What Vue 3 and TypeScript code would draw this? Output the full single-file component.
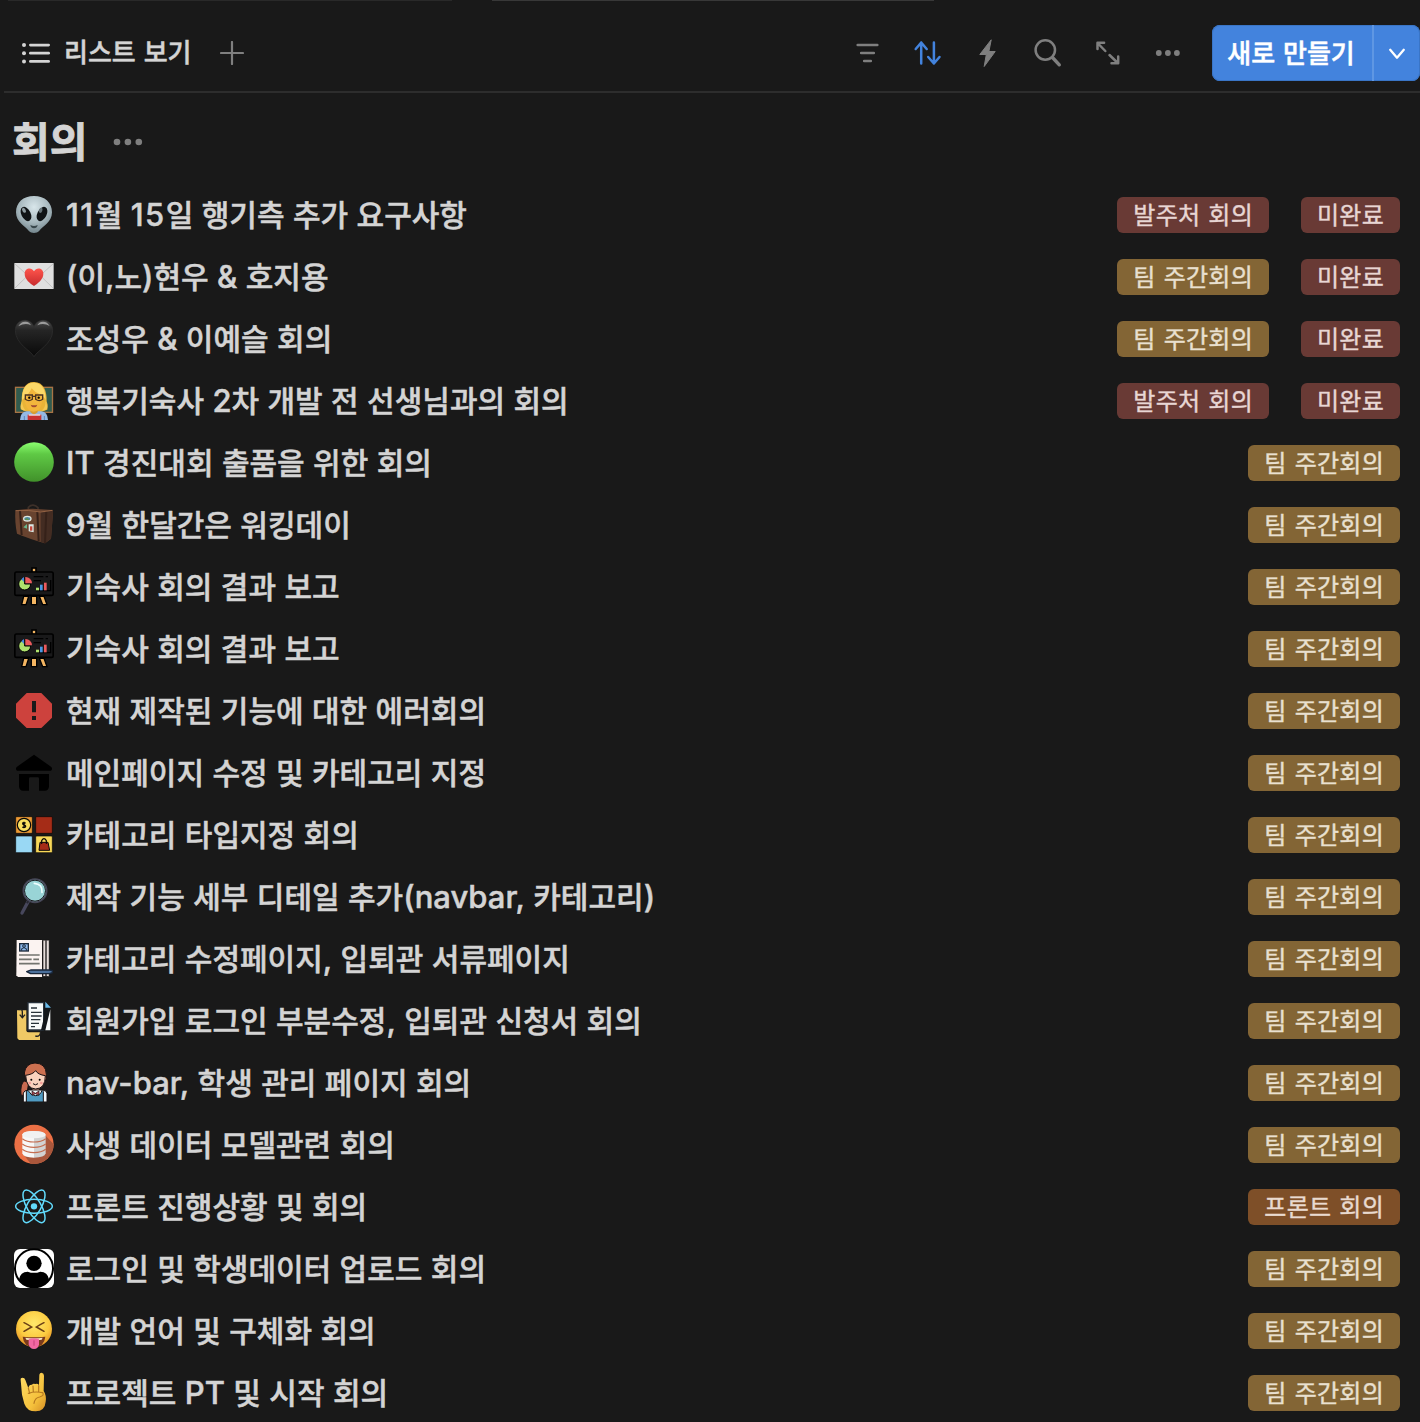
<script setup lang="ts">
type Tone = 'red' | 'yellow' | 'orange'

interface Tag {
  label: string
  tone: Tone
}

interface Meeting {
  icon: string
  title: string
  tags: Tag[]
}

interface Run {
  text: string
  kind: 'hangul' | 'latin' | 'number'
}

const client: Tag = { label: '발주처 회의', tone: 'red' }
const weekly: Tag = { label: '팀 주간회의', tone: 'yellow' }
const front: Tag = { label: '프론트 회의', tone: 'orange' }
const pending: Tag = { label: '미완료', tone: 'red' }

const meetings: Meeting[] = [
  { icon: 'alien', title: '11월 15일 행기측 추가 요구사항', tags: [client, pending] },
  { icon: 'letter', title: '(이,노)현우 & 호지용', tags: [weekly, pending] },
  { icon: 'heart', title: '조성우 & 이예슬 회의', tags: [weekly, pending] },
  { icon: 'teacher', title: '행복기숙사 2차 개발 전 선생님과의 회의', tags: [client, pending] },
  { icon: 'green', title: 'IT 경진대회 출품을 위한 회의', tags: [weekly] },
  { icon: 'luggage', title: '9월 한달간은 워킹데이', tags: [weekly] },
  { icon: 'board', title: '기숙사 회의 결과 보고', tags: [weekly] },
  { icon: 'board', title: '기숙사 회의 결과 보고', tags: [weekly] },
  { icon: 'error', title: '현재 제작된 기능에 대한 에러회의', tags: [weekly] },
  { icon: 'home', title: '메인페이지 수정 및 카테고리 지정', tags: [weekly] },
  { icon: 'category', title: '카테고리 타입지정 회의', tags: [weekly] },
  { icon: 'magnifier', title: '제작 기능 세부 디테일 추가(navbar, 카테고리)', tags: [weekly] },
  { icon: 'document', title: '카테고리 수정페이지, 입퇴관 서류페이지', tags: [weekly] },
  { icon: 'folder', title: '회원가입 로그인 부분수정, 입퇴관 신청서 회의', tags: [weekly] },
  { icon: 'student', title: 'nav-bar, 학생 관리 페이지 회의', tags: [weekly] },
  { icon: 'database', title: '사생 데이터 모델관련 회의', tags: [weekly] },
  { icon: 'react', title: '프론트 진행상황 및 회의', tags: [front] },
  { icon: 'profile', title: '로그인 및 학생데이터 업로드 회의', tags: [weekly] },
  { icon: 'laugh', title: '개발 언어 및 구체화 회의', tags: [weekly] },
  { icon: 'horns', title: '프로젝트 PT 및 시작 회의', tags: [weekly] },
]

// Latin letters and digits are set slightly larger than the hangul beside them.
function runs(title: string): Run[] {
  return title
    .split(/([A-Za-z0-9(),&-]+)/)
    .filter((text) => text !== '')
    .map((text) => ({
      text,
      kind: /^\d{2,}$/.test(text) ? 'number' : /^[A-Za-z0-9(),&-]/.test(text) ? 'latin' : 'hangul',
    }))
}
</script>

<template>
  <div class="page">
    <div class="edge"><i class="edge-a"></i><i class="edge-b"></i></div>
    <header class="bar">
      <div class="view">
        <svg class="view-icon" width="30" height="24" viewBox="0 0 30 24" fill="#d4d4d4">
          <circle cx="3" cy="4" r="2" /><circle cx="3" cy="12.2" r="2" /><circle cx="3" cy="20.4" r="2" />
          <rect x="8" y="2.7" width="21" height="2.8" rx="1.4" /><rect x="8" y="10.8" width="21" height="2.8" rx="1.4" /><rect x="8" y="19" width="21" height="2.8" rx="1.4" />
        </svg>
        <span class="view-name">리스트 보기</span>
        <svg class="plus" width="24" height="24" viewBox="0 0 24 24" stroke="#7f7f7f" stroke-width="2.2" stroke-linecap="round"><path d="M12 1v22M1 12h22" /></svg>
      </div>
      <nav class="tools">
        <svg width="32" height="32" viewBox="0 0 32 32" stroke="#7f7f7f" stroke-width="2.6" stroke-linecap="round"><path d="M5.7 8h19.6M9.2 16h12.6M12.2 24h6.6" /></svg>
        <svg width="32" height="32" viewBox="0 0 32 32" fill="none" stroke="#4383dd" stroke-width="2.5" stroke-linecap="round" stroke-linejoin="round"><path d="M9.200 26.500V5.500M3.700 12L9.200 5.600l5.500 6.400M21.900 5.500v21M16.200 20l5.700 6.500 5.600-6.500" /></svg>
        <svg width="32" height="32" viewBox="0 0 32 32" fill="#7f7f7f" stroke="#7f7f7f" stroke-width="1" stroke-linejoin="round"><path d="M19.200 2.800L7.800 17.500h6.500L12.200 29.500 23.200 14.500h-6.300z" /></svg>
        <svg width="32" height="32" viewBox="0 0 32 32" fill="none" stroke="#7f7f7f" stroke-linecap="round"><circle cx="13.300" cy="13" r="9.700" stroke-width="2.500" /><path d="M20.500 20.500l6.800 7.300" stroke-width="3.400" /></svg>
        <svg width="32" height="32" viewBox="0 0 32 32" fill="none" stroke="#7f7f7f" stroke-width="2.500" stroke-linecap="round" stroke-linejoin="round"><path d="M13.300 14L5.500 6M5.500 12V5.800h6.600M17.500 18l8.300 8M19.500 26.200h6.700v-6.700" /></svg>
        <svg width="32" height="32" viewBox="0 0 32 32" fill="#7f7f7f"><circle cx="6.800" cy="16" r="2.900" /><circle cx="15.900" cy="16" r="2.900" /><circle cx="24.900" cy="16" r="2.900" /></svg>
      </nav>
      <div class="create">
        <button class="create-main">새로 만들기</button>
        <button class="create-more">
          <svg width="20" height="14" viewBox="0 0 20 14" fill="none" stroke="#fff" stroke-width="2.300" stroke-linecap="round" stroke-linejoin="round"><path d="M3.200 2.800L10 10.700l6.800-7.900" /></svg>
        </button>
      </div>
    </header>

    <section class="heading">
      <h1>회의</h1>
      <svg width="30" height="8" viewBox="0 0 30 8" fill="#7f7f7f"><circle cx="4" cy="4" r="3.300" /><circle cx="14.900" cy="4" r="3.300" /><circle cx="25.800" cy="4" r="3.300" /></svg>
    </section>

    <ul class="list">
      <li v-for="(m, i) in meetings" :key="i" class="row">
        <svg class="icon" width="40" height="40" viewBox="0 0 120 120">
          <g v-if="m.icon === 'alien'">
            <radialGradient id="alien-skin" cx=".5" cy=".3" r=".7"><stop offset="0" stop-color="#d8e6ea" /><stop offset=".6" stop-color="#a6b7bd" /><stop offset="1" stop-color="#74868d" /></radialGradient>
            <path d="M60 6c33 0 54 20 54 49 0 30-28 42-38 55-8 9-24 9-32 0C34 97 6 85 6 55 6 26 27 6 60 6z" fill="url(#alien-skin)" />
            <ellipse cx="36" cy="60" rx="14" ry="23" transform="rotate(-27 36 60)" fill="#101416" />
            <ellipse cx="84" cy="60" rx="14" ry="23" transform="rotate(27 84 60)" fill="#101416" />
            <ellipse cx="30" cy="49" rx="5" ry="8" transform="rotate(-30 30 49)" fill="#8c999e" />
            <ellipse cx="80" cy="49" rx="5" ry="8" transform="rotate(20 80 49)" fill="#667378" />
            <path d="M49 93q11 6 22 0-2 10-11 10t-11-10z" fill="#39474c" />
          </g>
          <g v-else-if="m.icon === 'letter'">
            <rect x="1" y="21" width="118" height="78" rx="2" fill="#dfdfdf" />
            <path d="M2 97L43 57M118 97L77 57M2 23l50 45q8 6 16 0l50-45" fill="none" stroke="#bcbcbc" stroke-width="2.500" />
            <linearGradient id="seal" x2="0" y2="1"><stop stop-color="#ff554c" /><stop offset="1" stop-color="#c62b2d" /></linearGradient>
            <path d="M60 90C49 82 32 71 32 53c0-18 21-21 28-7 7-14 28-11 28 7 0 18-17 29-28 37z" fill="url(#seal)" />
          </g>
          <g v-else-if="m.icon === 'heart'">
            <linearGradient id="dark-heart" x2="0" y2="1"><stop stop-color="#4a4a4a" /><stop offset=".28" stop-color="#252525" /><stop offset="1" stop-color="#090909" /></linearGradient>
            <path d="M60 116C51 98 4 78 4 37 4 1 49-3 60 26 71-3 116 1 116 37c0 41-47 61-56 79z" fill="url(#dark-heart)" stroke="#303030" stroke-width="2" />
            <path d="M13 25q7-15 22-14 12 1 16 11-17-10-38 3zM70 22q4-10 17-11 13 0 20 13-18-11-37-2z" fill="#bbb" opacity=".75" />
          </g>
          <g v-else-if="m.icon === 'teacher'">
            <rect x="4.500" y="22" width="111" height="75" fill="#315b4e" stroke="#a87445" stroke-width="4" />
            <path d="M20 88q-2-13 3-24C23 30 31 6 60 6s39 27 38 58q6 12 2 25-17 8-40 8T20 88z" fill="#e9b437" />
            <path d="M18 120q1-24 20-26h44q19 2 20 26z" fill="#94b9e5" />
            <path d="M49 82h22v15l-11 7-11-7z" fill="#d79e32" />
            <path d="M32 50q15-9 21-26 14 18 33 23 0 45-27 48-27-3-27-45z" fill="#f2b63c" />
            <path d="M24 60Q24 8 60 8q34 1 35 52-8-14-19-18-15-6-23-17-9 20-29 35z" fill="#fbd868" />
            <path d="M24 60q1 24 12 32-16 0-16-12zM95 60q0 24-12 32 18-1 17-12z" fill="#f4c954" />
            <path d="M34 45h21v13q-10 8-21 0zM65 45h21v13q-10 8-21 0zM55 49h10" fill="none" stroke="#493222" stroke-width="4" />
            <circle cx="46" cy="53" r="3.500" /><circle cx="74" cy="53" r="3.500" />
            <path d="M50 74q10 4 20 0-2 8-10 8t-10-8z" fill="#a34c32" />
            <path d="M41 104h41v16H41z" fill="#c83232" /><path d="M44 103h35v4H44z" fill="#eee" />
            <path d="M31 108v12M91 108v12" stroke="#5d86bd" stroke-width="3" />
          </g>
          <g v-else-if="m.icon === 'green'">
            <linearGradient id="ball" x2="0" y2="1"><stop stop-color="#8bff70" /><stop offset=".3" stop-color="#5fc945" /><stop offset="1" stop-color="#41912a" /></linearGradient>
            <circle cx="60" cy="60" r="59.500" fill="url(#ball)" />
          </g>
          <g v-else-if="m.icon === 'luggage'">
            <path d="M43 20V10q14-14 29 1v13" fill="none" stroke="#3d3029" stroke-width="5" />
            <path d="M4 19q30-5 52-5l60 4q2 1 1 6l-6 80-18 14Q45 104 9 89 2 57 4 19z" fill="#68432f" />
            <path d="M80 23l34-5q4 1 3 9l-6 77-18 14-13-4z" fill="#432c22" />
            <path d="M18 20l5 73M70 23l4 88M97 21l-4 97" stroke="#352119" stroke-width="6" />
            <path d="M5 20q38-3 75 4l35-5" stroke="#946344" stroke-width="3" fill="none" />
            <ellipse cx="40" cy="44" rx="13" ry="9" fill="#dfe6dd" /><ellipse cx="40" cy="44" rx="9" ry="5" fill="#4c86a3" /><path d="M31 47l7-5 9 6z" fill="#609448" />
            <path d="M28 70l11-10v14z" fill="#69b78e" /><path d="M44 61h15v24l-15-3z" fill="#dce8e6" /><path d="M48 67h7v13h-7z" fill="#c8493e" />
          </g>
          <g v-else-if="m.icon === 'board'">
            <path d="M29 91h15l-8 25H23zM52 91h16v25H52zM76 91h14l9 25H86z" fill="#f3b562" stroke="#000" stroke-width="4" />
            <rect x="54" y="6" width="12" height="13" fill="#f3b562" stroke="#000" stroke-width="5" />
            <rect x="2.500" y="18" width="115" height="70" rx="5" fill="#19191a" stroke="#000" stroke-width="5" />
            <path d="M59 32h29M95 32h7M59 44h22M110 42v32H66" fill="none" stroke="#000" stroke-width="4" />
            <path d="M32 54V36a18 18 0 1 0 18 18z" fill="#aee16e" stroke="#000" stroke-width="3" />
            <path d="M34 33a19 19 0 0 1 20 19H34z" fill="#eb5a5d" /><path d="M30 33a18 18 0 0 0-8 7l8 8z" fill="#4387df" />
            <path d="M66 65h9v8h-9z" fill="#aee16e" /><path d="M78 56h8v17h-8z" fill="#4b98e5" /><path d="M90 50h8v23h-8z" fill="#eb5a5d" />
          </g>
          <g v-else-if="m.icon === 'error'">
            <path d="M38 9h44l32 32v42l-32 31H38L6 83V41z" fill="#cd423d" /><path d="M54 33h12v34H54zM54 78h12v12H54z" fill="#1a1a1a" />
          </g>
          <g v-else-if="m.icon === 'home'">
            <path d="M60 8l52 37q5 6-1 11H9q-6-5-1-11zM15 66h90v38q-2 12-12 12H75V80q0-4-4-4H49q-4 0-4 4v36H27q-10 0-12-12z" />
          </g>
          <g v-else-if="m.icon === 'category'" stroke="#080808" stroke-width="2">
            <rect x="5" y="8" width="50" height="50" rx="3" fill="#ed9b35" /><rect x="65" y="8" width="50" height="50" rx="3" fill="#a52c17" />
            <rect x="5" y="66" width="50" height="50" rx="3" fill="#99d8f4" /><rect x="65" y="66" width="50" height="50" rx="3" fill="#f8d858" />
            <circle cx="30" cy="33" r="20" fill="#f8df60" stroke-width="3.500" />
            <path d="M35 28q-5-4-9-1-1 4 4 6 7 2 4 6-4 3-9 0M30 23v20" fill="none" stroke-width="4" />
            <path d="M78 85h24l5 24H75z" fill="#a52c17" stroke-width="3" /><path d="M83 90V80q7-12 14 0v10" fill="none" stroke-width="3.500" />
          </g>
          <g v-else-if="m.icon === 'magnifier'">
            <path d="M44 74L24 111" stroke="#47475c" stroke-width="10" stroke-linecap="round" /><path d="M45 71l-6 11" stroke="#282832" stroke-width="6" />
            <circle cx="63" cy="44" r="35" fill="#99d4d6" stroke="#464657" stroke-width="5" /><circle cx="63" cy="44" r="31.500" fill="none" stroke="#18181c" stroke-width="3" />
            <path d="M61 22q25 2 23 27" fill="none" stroke="#f0ffff" stroke-width="5" stroke-linecap="round" />
          </g>
          <g v-else-if="m.icon === 'document'">
            <rect x="78" y="6" width="28" height="110" rx="2" fill="#e6dcda" stroke="#161616" stroke-width="3" />
            <path d="M86 7v108M96 7v108" stroke="#1d1a1a" stroke-width="4" /><path d="M8 6h76v111H12l-5-5z" fill="#fbf3f1" />
            <rect x="17" y="17" width="26" height="22" fill="#8cb8ec" stroke="#1b293a" stroke-width="4" /><circle cx="30" cy="24" r="4" fill="none" stroke="#1b293a" stroke-width="3" /><path d="M23 38v-6q7-6 14 0v6" fill="none" stroke="#1b293a" stroke-width="3" />
            <path d="M15 51h62M15 64h38M58 64h17M15 77h62" stroke="#73746f" stroke-width="5" />
            <path d="M38 101l12-5h56l9 2v6l-9 3H50z" fill="#4c709b" stroke="#18263a" stroke-width="4" stroke-linejoin="round" />
          </g>
          <g v-else-if="m.icon === 'folder'">
            <path d="M9 31h28v61q1 5 7 5h34v23H15l-5-5z" fill="#f0c965" /><path d="M42 8h47v82H42z" fill="#f8fafa" stroke="#27303a" stroke-width="4" />
            <path d="M90 5l19 22-3 65-25-2 9-38z" fill="#13171b" /><path d="M94 5l17 18H94z" fill="#67b8e8" /><path d="M109 28v63H94z" fill="#f8fafa" />
            <path d="M51 24h18M51 37h32M51 48h32M51 59h28M51 70h24M51 80h12" stroke="#273138" stroke-width="4" />
            <path d="M16 29q9-3 9 7v16M17 44l8 9 8-9M64 108q15 4 16-14" fill="none" stroke="#202020" stroke-width="4" />
          </g>
          <g v-else-if="m.icon === 'student'" stroke="#171012" stroke-width="3">
            <path d="M31 33q4-29 32-30 33 1 34 34v17H36z" fill="#cc7050" /><path d="M31 57q-13 8-10 42 11 5 18-3l5-35z" fill="#c86950" />
            <path d="M54 72h22v16l-11 10-11-10z" fill="#e6ac91" /><path d="M35 40q22-3 30-14 7 12 29 15 0 39-29 40-28-1-30-41z" fill="#f9d2bd" />
            <path d="M28 120V93q2-8 16-9h42q12 1 13 11v25z" fill="#f4fafd" /><path d="M42 85l-5 3v32h51V89l-4-4q-5 16-20 16-14 0-22-16z" fill="#4f9bc2" />
            <path d="M54 87l10 7 11-7v13l-11-5-10 5z" fill="#ad4652" stroke-width="2" />
            <g stroke="none"><circle cx="52" cy="53" r="3" /><circle cx="77" cy="53" r="3" /><circle cx="47" cy="63" r="4" fill="#f39c98" /><circle cx="82" cy="63" r="4" fill="#f39c98" /></g><path d="M57 65q7 7 15 0" fill="none" />
          </g>
          <g v-else-if="m.icon === 'database'">
            <circle cx="60" cy="61" r="59" fill="#eb7045" /><path d="M95 35l24 26A59 59 0 0 1 50 119L28 91z" fill="#a9573c" />
            <path d="M25 31v57q3 13 35 13V21q-31 0-35 10z" fill="#f7f7f7" /><path d="M60 21q32 1 35 11v56q-3 13-35 13z" fill="#d2d2d2" /><ellipse cx="60" cy="32" rx="35" ry="11" fill="#f1f1f1" />
            <path d="M25 44q13 10 35 10t35-10M25 60q13 10 35 10t35-10M25 76q13 10 35 10t35-10" fill="none" stroke="#c56d50" stroke-width="3.500" />
          </g>
          <g v-else-if="m.icon === 'react'" fill="none" stroke="#61dafb" stroke-width="4.500">
            <ellipse cx="60" cy="61" rx="55" ry="21" /><ellipse cx="60" cy="61" rx="55" ry="21" transform="rotate(60 60 61)" /><ellipse cx="60" cy="61" rx="55" ry="21" transform="rotate(120 60 61)" /><circle cx="60" cy="61" r="9.500" fill="#61dafb" stroke="none" />
          </g>
          <g v-else-if="m.icon === 'profile'">
            <rect y="3" width="120" height="117" rx="18" fill="#fff" /><circle cx="60" cy="61" r="57" fill="#fff" stroke="#000" stroke-width="6" /><circle cx="60" cy="46" r="23" />
            <path d="M15 94q4-22 26-23 19 7 38 0 22 1 26 23-14 25-45 25T15 94z" />
          </g>
          <g v-else-if="m.icon === 'laugh'">
            <radialGradient id="laugh-skin" cy=".35" r=".65"><stop stop-color="#ffe86b" /><stop offset=".65" stop-color="#fccb40" /><stop offset="1" stop-color="#e69225" /></radialGradient>
            <circle cx="60" cy="57" r="54" fill="url(#laugh-skin)" /><path d="M30 38q14 7 23 13-10 5-23 13M90 38Q76 45 67 51q10 5 23 13" fill="none" stroke="#6b3f16" stroke-width="4.500" stroke-linecap="round" />
            <path d="M26 80q34 4 68 0-3 31-34 31T26 80z" fill="#7a3a1c" /><path d="M34 83q26 3 52 0l-3 6q-23 3-46 0z" fill="#f6e3c4" />
            <path d="M44 88q16-6 31 0v15q-2 14-15 14t-16-14z" fill="#f168a2" /><path d="M60 91v16" stroke="#c74079" stroke-width="3" />
          </g>
          <g v-else>
            <linearGradient id="horns-skin" x2="1" y2="1"><stop stop-color="#ffde68" /><stop offset=".65" stop-color="#f5c13c" /><stop offset="1" stop-color="#d58e25" /></linearGradient>
            <path d="M20 24q-1-7 6-7 6 0 8 7l9 24q2-11 11-10 3-5 10-2 6-3 11 3l1-31q1-6 7-6 7 1 7 9l-1 46q9 13 6 32-2 28-30 29-26 0-34-23L24 68z" fill="url(#horns-skin)" />
            <path d="M43 48l4 16M57 42l1 18M74 41v18M43 64q20-7 43-2 6 9-9 13-14 2-17 19" fill="none" stroke="#b77a21" stroke-width="3.500" stroke-linecap="round" />
          </g>
        </svg>
        <span class="title"><span v-for="(r, k) in runs(m.title)" :key="k" :class="r.kind">{{ r.text }}</span></span>
        <span class="tags"><span v-for="t in m.tags" :key="t.label" class="tag" :class="t.tone">{{ t.label }}</span></span>
      </li>
    </ul>
  </div>
</template>

<style>
body {
  background: #191919;
}
</style>

<style scoped>
.page {
  box-sizing: border-box;
  width: 1420px;
  height: 1422px;
  overflow: hidden;
  background: #191919;
  color: #d4d4d4;
  font-family: Inter, "Noto Sans CJK KR", sans-serif;
}
.edge {
  display: flex;
  gap: 40px;
  height: 1px;
  padding-left: 8px;
}
.edge-a {
  width: 444px;
  background: #292929;
}
.edge-b {
  width: 442px;
  background: #383838;
}
.bar {
  box-sizing: border-box;
  display: flex;
  align-items: center;
  height: 92px;
  margin-left: 4px;
  padding-top: 14px;
  border-bottom: 2px solid #2d2d2d;
}
.view {
  display: flex;
  align-items: center;
  flex: 1;
  padding-left: 17px;
}
.view-name {
  margin: 0 28px 0 13px;
  font-size: 26px;
  font-weight: 500;
  line-height: 40px;
  word-spacing: 1px;
  white-space: nowrap;
  -webkit-text-stroke: 0.5px currentColor;
}
.tools {
  display: flex;
  gap: 28px;
  margin-right: 28px;
}
.create {
  display: flex;
  width: 208px;
  height: 56px;
  border-radius: 8px;
  background: #4383dd;
  box-shadow: inset 0 0 0 1px #3a75c6;
}
.create button {
  padding: 0;
  border: 0;
  background: none;
  color: #fff;
  font: inherit;
}
.create .create-main {
  width: 162px;
  padding: 0 2px 4px 0;
  border-right: 2px solid #5f97e3;
  font-size: 26px;
  font-weight: 500;
  word-spacing: 1px;
  -webkit-text-stroke: 0.5px currentColor;
}
.create .create-more {
  display: flex;
  flex: 1;
  align-items: center;
  justify-content: center;
  padding-top: 2px;
}
.heading {
  display: flex;
  align-items: center;
  gap: 26px;
  height: 91px;
  box-sizing: border-box;
  padding: 6px 0 0 12px;
}
h1 {
  margin: 0;
  font-size: 41px;
  font-weight: 700;
  line-height: 60px;
  -webkit-text-stroke: 0.8px currentColor;
}
.list {
  margin: 0;
  padding: 0;
  list-style: none;
}
.row {
  display: flex;
  align-items: center;
  height: 62px;
  padding: 0 20px 0 14px;
}
.icon {
  flex: none;
  margin: -2px 12px 0 0;
}
.title {
  flex: 1;
  font-size: 30px;
  font-weight: 500;
  line-height: 44px;
  word-spacing: 0.4px;
  white-space: pre;
  -webkit-text-stroke: 0.5px currentColor;
}
.latin,
.number {
  font-size: 31px;
  line-height: 1;
}
.number {
  letter-spacing: 1.5px;
}
.tags {
  display: flex;
  gap: 32px;
}
.tag {
  height: 35px;
  padding: 1px 16px 0;
  border-radius: 6px;
  font-size: 24px;
  line-height: 36px;
  letter-spacing: 0.25px;
  word-spacing: 1px;
  white-space: nowrap;
  -webkit-text-stroke: 0.4px currentColor;
}
.red {
  background: #693a35;
  color: #e8d6d4;
}
.yellow {
  background: #836535;
  color: #e9e0d0;
}
.orange {
  background: #7e4f28;
  color: #e9dad0;
}
</style>
